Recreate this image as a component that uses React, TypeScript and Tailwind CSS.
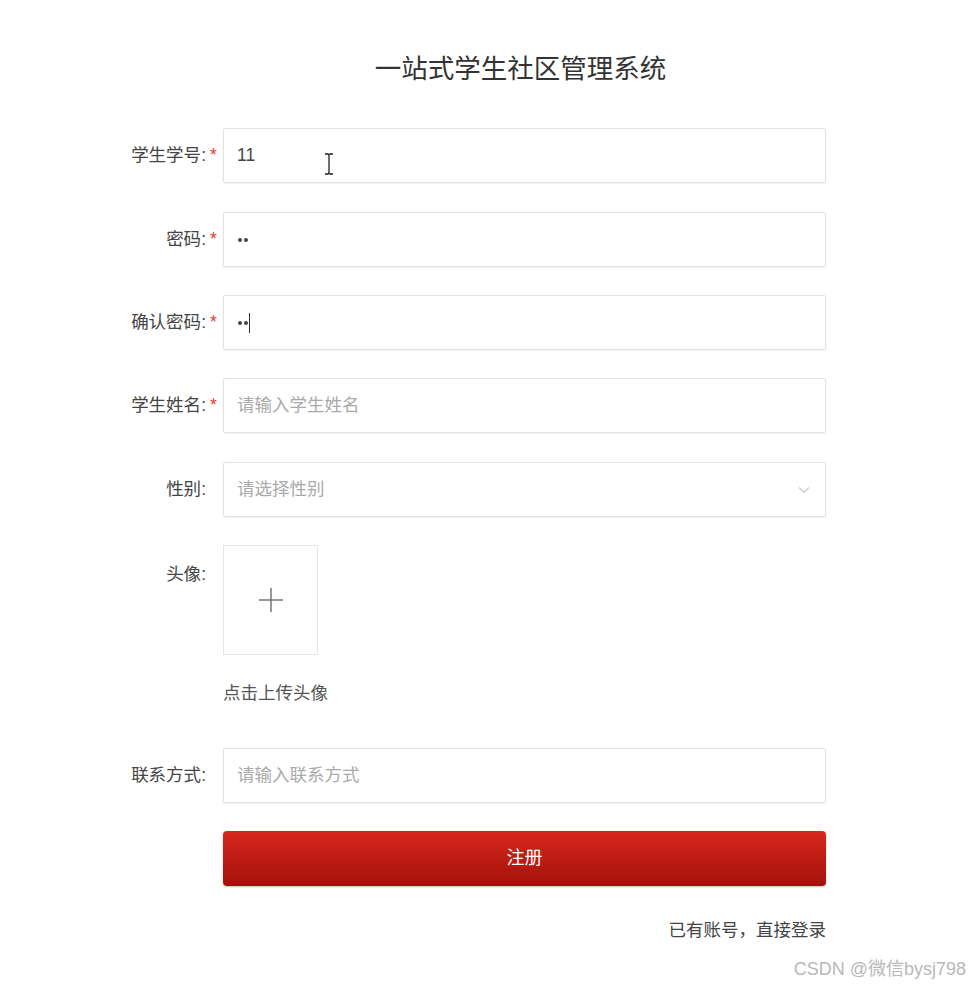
const font = { fontFamily: '"Liberation Sans", "Noto Sans CJK SC", sans-serif' };

function Label({ text, required }: { text: string; required?: boolean }) {
  return (
    <div className="w-[223px] shrink-0 flex justify-end pr-[5px] text-[17.5px] text-[#444]">
      <span>{text}:</span>
      <span className={required ? "ml-[4px] w-[8px] text-[#e23b2e]" : "ml-[4px] w-[8px]"}>{required ? "*" : ""}</span>
    </div>
  );
}

function Box({ children }: { children: React.ReactNode }) {
  return (
    <div className="relative w-[603px] h-[55px] border border-[#e2e2e2] rounded-[2px] shadow-[0_1px_2px_rgba(0,0,0,0.06)] flex items-center px-[13px] text-[17.5px] bg-white">
      {children}
    </div>
  );
}

function Dots() {
  return (
    <span className="flex gap-[2px] ml-[1px]">
      <span className="w-[4px] h-[4px] rounded-full bg-[#444]" />
      <span className="w-[4px] h-[4px] rounded-full bg-[#444]" />
    </span>
  );
}

export default function App() {
  return (
    <div style={font} className="w-[969px] h-[990px] bg-white relative text-[#333]">
      <div className="pt-[51px]">
        <h1 className="text-center text-[26.5px] text-[#333] leading-[36px] pl-[72px]">一站式学生社区管理系统</h1>

        <div className="mt-[41px] flex flex-col">
          <div className="flex items-center h-[55px]">
            <Label text="学生学号" required />
            <Box>
              <span className="text-[#444]">11</span>
              <svg className="absolute left-[100px] top-[24px]" width="10" height="22" viewBox="0 0 10 22">
                <path d="M1 1h3l1 1 1-1h3M5 2v18M1 21h3l1-1 1 1h3" fill="none" stroke="#222" strokeWidth="1.3" />
              </svg>
            </Box>
          </div>

          <div className="flex items-center h-[55px] mt-[29px]">
            <Label text="密码" required />
            <Box>
              <Dots />
            </Box>
          </div>

          <div className="flex items-center h-[55px] mt-[28px]">
            <Label text="确认密码" required />
            <Box>
              <Dots />
              <span className="ml-[1px] w-[1px] h-[20px] bg-[#333]" />
            </Box>
          </div>

          <div className="flex items-center h-[55px] mt-[28px]">
            <Label text="学生姓名" required />
            <Box>
              <span className="text-[#aaa]">请输入学生姓名</span>
            </Box>
          </div>

          <div className="flex items-center h-[55px] mt-[29px]">
            <Label text="性别" />
            <Box>
              <span className="text-[#aaa] flex-1">请选择性别</span>
              <svg width="12" height="8" viewBox="0 0 12 8" className="mr-[2px]">
                <path d="M1 1.5l5 5 5-5" fill="none" stroke="#c8c8c8" strokeWidth="1.2" />
              </svg>
            </Box>
          </div>

          <div className="flex mt-[28px]">
            <div className="pt-[16px]">
              <Label text="头像" />
            </div>
            <div className="flex flex-col">
              <div className="w-[95px] h-[110px] border border-[#e6e6e6] flex items-center justify-center">
                <svg width="26" height="26" viewBox="0 0 26 26">
                  <path d="M13 1v24M1 13h24" stroke="#777" strokeWidth="1.5" />
                </svg>
              </div>
              <div className="mt-[27px] text-[17.5px] text-[#555] leading-[22px]">点击上传头像</div>
            </div>
          </div>

          <div className="flex items-center h-[55px] mt-[44px]">
            <Label text="联系方式" />
            <Box>
              <span className="text-[#aaa]">请输入联系方式</span>
            </Box>
          </div>

          <div className="flex mt-[28px]">
            <div className="w-[223px] shrink-0" />
            <button className="w-[603px] h-[55px] rounded-[4px] bg-gradient-to-b from-[#d8271d] to-[#a3110a] text-white text-[18px] shadow-[0_1px_2px_rgba(0,0,0,0.25)]">
              注册
            </button>
          </div>

          <div className="flex mt-[33px]">
            <div className="w-[826px] text-right text-[17.5px] text-[#444] leading-[22px]">已有账号，直接登录</div>
          </div>
        </div>
      </div>

      <div className="absolute right-[3px] bottom-[7px] text-[18px] text-[#b8b8b8]">CSDN @微信bysj798</div>
    </div>
  );
}
